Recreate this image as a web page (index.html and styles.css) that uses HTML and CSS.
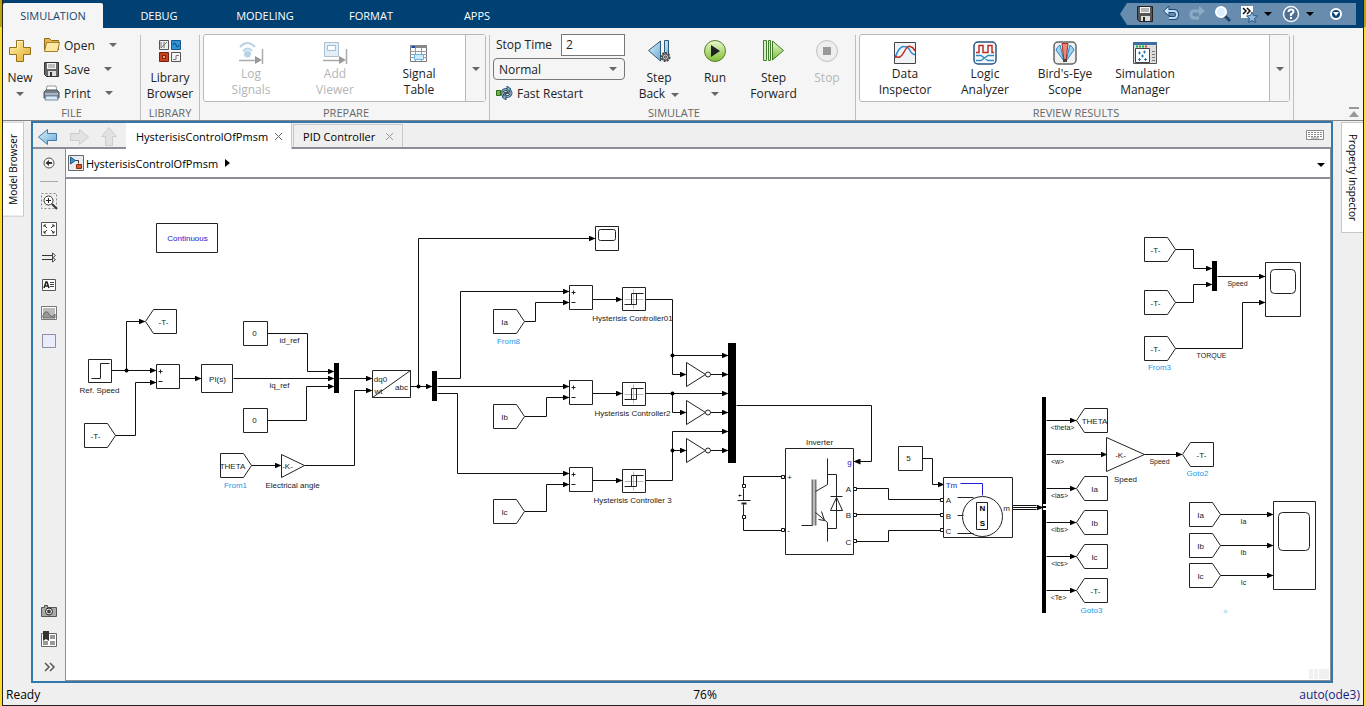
FILE: index.html
```
<!doctype html>
<html lang="en">
    <head>
        <meta charset="UTF-8" />
        <meta name="viewport" content="width=device-width, initial-scale=1.0" />
        <title>HysterisisControlOfPmsm - Simulink</title>
        <link rel="stylesheet" href="styles.css" />
    </head>
    <body>
        <div class="window">
            <header class="topbar">
                <nav class="ribbon-tabs">
                    <button class="ribbon-tab active">SIMULATION</button>
                    <button class="ribbon-tab">DEBUG</button>
                    <button class="ribbon-tab">MODELING</button>
                    <button class="ribbon-tab">FORMAT</button>
                    <button class="ribbon-tab">APPS</button>
                </nav>
                <div class="quick-access">
                    <button aria-label="Save">
                        <svg width="18" height="18" viewBox="0 0 18 18">
                            <path d="M1.500 1.500h15v15h-13l-2-2z" fill="#555" stroke="#222" />
                            <path d="M4 2h10v6H4z" fill="#f4f4f4" />
                            <path d="M5 4h8M5 6h8" stroke="#777" />
                            <path d="M5 11h9v5H5z" fill="#ddd" />
                            <path d="M7 12h2v4H7z" fill="#222" />
                        </svg>
                    </button>
                    <button aria-label="Undo">
                        <svg width="18" height="18" viewBox="0 0 18 18">
                            <path d="M6 6h6q3 0 3 3.500T12 13H7" fill="none" stroke="#1c4a78" stroke-width="4" />
                            <path d="M7 1v10L1.500 6z" fill="#cfe4f7" stroke="#1c4a78" />
                            <path d="M6 6h6q3 0 3 3.500T12 13H7" fill="none" stroke="#c3dcf3" stroke-width="2" />
                        </svg>
                    </button>
                    <button aria-label="Redo">
                        <svg width="18" height="18" viewBox="0 0 18 18">
                            <path d="M12 6H6q-3 0-3 3.500T6 13h5" fill="none" stroke="#8eabc5" stroke-width="3" />
                            <path d="M11 1v10l6-5z" fill="#8eabc5" />
                        </svg>
                    </button>
                    <button aria-label="Search">
                        <svg width="18" height="18" viewBox="0 0 18 18">
                            <path d="M10 10l6 6" stroke="#1b4770" stroke-width="3" />
                            <circle cx="7" cy="7" r="5" fill="#d9eefc" stroke="#fff" stroke-width="2" />
                        </svg>
                    </button>
                    <button class="with-caret" aria-label="Favorites">
                        <svg width="18" height="18" viewBox="0 0 18 18">
                            <path d="M1 1h12v12H1z" fill="#fff" />
                            <path d="M3 3l3 3-3 3M7 3l3 3-3 3" fill="none" stroke="#111" stroke-width="1.500" />
                            <path d="M12 7l1.500 3.500 4 .5-3 2.500 1 4-3.500-2-3.500 2 1-4-3-2.500 4-.5z" fill="#8fb9de" stroke="#2d5c8a" />
                        </svg>
                        <span class="caret dark"></span>
                    </button>
                    <button class="with-caret" aria-label="Help">
                        <svg width="18" height="18" viewBox="0 0 18 18">
                            <circle cx="9" cy="9" r="7.500" fill="#4d6f92" stroke="#f2f6fa" stroke-width="1.500" />
                            <path d="M6.500 7q0-2.500 2.500-2.500t2.500 2q0 1.500-1.500 2T9 11" fill="none" stroke="#fff" stroke-width="2" />
                            <path d="M8 12h2v2H8z" fill="#fff" />
                        </svg>
                        <span class="caret dark"></span>
                    </button>
                    <button aria-label="Minimize toolstrip">
                        <svg width="14" height="14" viewBox="0 0 14 14">
                            <circle cx="7" cy="7" r="5" fill="#0d4675" stroke="#fff" stroke-width="2" />
                            <path d="M4 5h6l-3 4z" fill="#fff" />
                        </svg>
                    </button>
                </div>
            </header>

            <section class="ribbon">
                <div class="group group-file">
                    <div class="group-body">
                        <button class="tool tool-new">
                            <svg width="24" height="24" viewBox="0 0 24 24">
                                <path d="M8.500 1.500h7v7h7v7h-7v7h-7v-7h-7v-7h7z" fill="url(#gold)" stroke="#94701b" />
                                <path d="M9.500 9.500v-7h5" fill="none" stroke="#fffbe0" />
                            </svg>
                            <span>New</span>
                            <span class="caret"></span>
                        </button>
                        <div class="file-list">
                            <button class="row-tool">
                                <svg width="17" height="16" viewBox="0 0 17 16">
                                    <path d="M1.500 13V1.500h5l2 2h7V13" fill="#e3b74d" stroke="#8b681c" />
                                    <path d="M1.500 14.500l2-9h13l-2 9z" fill="#fbe8a2" stroke="#a57d27" />
                                </svg>
                                <span>Open</span>
                                <span class="caret"></span>
                            </button>
                            <button class="row-tool">
                                <svg width="17" height="17" viewBox="0 0 17 17">
                                    <path d="M1.500 1.500h14v14h-12l-2-2z" fill="#666" stroke="#333" />
                                    <path d="M4 2h9v6H4z" fill="#f4f4f4" />
                                    <path d="M5 4h7M5 6h7" stroke="#888" />
                                    <path d="M5 10h8v5H5z" fill="#ddd" />
                                    <path d="M7 11h2v4H7z" fill="#333" />
                                </svg>
                                <span>Save</span>
                                <span class="caret"></span>
                            </button>
                            <button class="row-tool">
                                <svg width="17" height="16" viewBox="0 0 17 16">
                                    <path d="M4 1h9l1 6H3z" fill="#fff" stroke="#999" />
                                    <path d="M1 7l2-2h11l2 2v6H1z" fill="#76808c" stroke="#4b535c" />
                                    <path d="M2 8h13v2H2z" fill="#aab5c1" />
                                    <path d="M3 11h11l1 4H2z" fill="#dbe8f6" stroke="#7790a9" />
                                </svg>
                                <span>Print</span>
                                <span class="caret"></span>
                            </button>
                        </div>
                    </div>
                    <h2>FILE</h2>
                </div>

                <div class="group group-library">
                    <div class="group-body">
                        <button class="tool">
                            <svg width="24" height="24" viewBox="0 0 24 24">
                                <path d="M1.500 1.500h9v9h-9z" fill="#eee" stroke="#555" />
                                <path d="M3 9V3m3 6V3m3 0L3 9" fill="none" stroke="#777" />
                                <path d="M13.500 1.500h9v9h-9z" fill="#3193d6" stroke="#14578c" />
                                <path d="M15 6q1.500-4 3 0t3 0" fill="none" stroke="#0b3f70" />
                                <path d="M1.500 13.500h9v9h-9z" fill="#c9421f" stroke="#74200d" />
                                <path d="M4.500 16.500h3v3h-3z" fill="#f0a080" stroke="#74200d" />
                                <path d="M13.500 13.500h9v9h-9z" fill="#f4f4f4" stroke="#555" />
                                <path d="M15 20.500h3v-4h3" fill="none" stroke="#777" />
                            </svg>
                            <span>Library<br />Browser</span>
                        </button>
                    </div>
                    <h2>LIBRARY</h2>
                </div>

                <div class="group group-prepare">
                    <div class="group-body">
                        <div class="gallery">
                            <button class="tool" disabled>
                                <svg width="26" height="24" viewBox="0 0 26 24">
                                    <path d="M2 6q7-8 15 0M5 10q5-5 9 0" fill="none" stroke="#b9d3e6" stroke-width="2" />
                                    <circle cx="9.500" cy="13" r="3.500" fill="#b9d3e6" />
                                    <path d="M1 19.500h17M24.500 8v15" stroke="#aaa" stroke-width="1.500" />
                                    <path d="M17 15v8l7-4z" fill="#999" />
                                </svg>
                                <span>Log<br />Signals</span>
                            </button>
                            <button class="tool" disabled>
                                <svg width="26" height="24" viewBox="0 0 26 24">
                                    <path d="M2.500 1.500h14v14h-14z" fill="#e3eef6" stroke="#a9c1d3" />
                                    <path d="M5.500 4.500h8v5h-8z" fill="#fff" stroke="#9fbdd3" />
                                    <path d="M1 19.500h17M24.500 8v15" stroke="#aaa" stroke-width="1.500" />
                                    <path d="M17 15v8l7-4z" fill="#999" />
                                </svg>
                                <span>Add<br />Viewer</span>
                            </button>
                            <button class="tool">
                                <svg width="20" height="22" viewBox="0 0 20 22">
                                    <path d="M1.500 3.500h16v16h-16z" fill="#fff" stroke="#777" />
                                    <path d="M1 3h17v3H1z" fill="#888" />
                                    <path d="M3 4h3v2H3z" fill="#1747a5" />
                                    <path d="M1 9.500h17M1 12.500h17M1 15.500h17M6.500 6v13M12.500 6v13" stroke="#999" />
                                    <path d="M5.500 12.500h9v5h-9z" fill="#cbe9fd" stroke="#62b4ea" />
                                </svg>
                                <span>Signal<br />Table</span>
                            </button>
                            <button class="gallery-more" aria-label="More"><span class="caret"></span></button>
                        </div>
                    </div>
                    <h2>PREPARE</h2>
                </div>

                <div class="group group-simulate">
                    <div class="group-body">
                        <div class="sim-settings">
                            <div class="stop-time">
                                <label for="stopTime">Stop Time</label>
                                <input type="text" id="stopTime" value="2" />
                            </div>
                            <div class="mode">
                                <select aria-label="Simulation mode">
                                    <option>Normal</option>
                                </select>
                                <span class="caret"></span>
                            </div>
                            <button class="row-tool">
                                <svg width="17" height="14" viewBox="0 0 17 14">
                                    <path d="M.5 4.500h4v5h-4z" fill="#6cbb3c" stroke="#2f6b17" />
                                    <ellipse cx="10.500" cy="7" rx="4.500" ry="3.500" fill="#eef5fa" stroke="#2f5571" stroke-width="3" />
                                    <ellipse cx="10.500" cy="7" rx="4.500" ry="3.500" fill="none" stroke="#a5cbe4" />
                                    <path d="M11 0l4 3-4 3zM10 8l-4 3 4 3z" fill="#7fb0d0" stroke="#2f5571" />
                                    <path d="M8 7h5" stroke="#555" stroke-width="2" />
                                </svg>
                                <span>Fast Restart</span>
                            </button>
                        </div>
                        <div class="sim-buttons">
                            <button class="tool">
                                <svg width="24" height="24" viewBox="0 0 24 24">
                                    <path d="M13.500 2v20L1.500 11.500z" fill="url(#sky)" stroke="#2d5876" />
                                    <path d="M17.500 1.500h4v19h-4z" fill="url(#sky)" stroke="#2d5876" />
                                    <circle cx="18.500" cy="18" r="4" fill="#ddd" stroke="#444" stroke-width="2" stroke-dasharray="2 1" />
                                    <circle cx="18.500" cy="18" r="3" fill="#ccc" stroke="#444" />
                                    <circle cx="18.500" cy="18" r="1" fill="#fff" stroke="#333" />
                                </svg>
                                <span>Step<br />Back&nbsp; <span class="caret"></span></span>
                            </button>
                            <button class="tool">
                                <svg width="24" height="24" viewBox="0 0 24 24">
                                    <circle cx="12" cy="12" r="10.500" fill="url(#lime)" stroke="#5b7f2a" />
                                    <path d="M8 6v12l9-6z" fill="#222" />
                                </svg>
                                <span>Run</span>
                                <span class="caret"></span>
                            </button>
                            <button class="tool">
                                <svg width="24" height="24" viewBox="0 0 24 24">
                                    <path d="M1.500 1.500h3v20h-3zM6.500 1.500h2v20h-2z" fill="#d5efc4" stroke="#407d2c" />
                                    <path d="M10.500 2v19l11-9.500z" fill="url(#lime)" stroke="#407d2c" />
                                </svg>
                                <span>Step<br />Forward</span>
                            </button>
                            <button class="tool" disabled>
                                <svg width="24" height="24" viewBox="0 0 24 24">
                                    <circle cx="12" cy="12" r="10.500" fill="#eee" stroke="#c2c2c2" />
                                    <path d="M8 8h8v8H8z" fill="#999" />
                                </svg>
                                <span>Stop</span>
                            </button>
                        </div>
                    </div>
                    <h2>SIMULATE</h2>
                </div>

                <div class="group group-review">
                    <div class="group-body">
                        <div class="gallery">
                            <button class="tool">
                                <svg width="24" height="24" viewBox="0 0 24 24">
                                    <path d="M1.500 1.500h21v21h-21z" fill="#f0f2f4" stroke="#444" />
                                    <path d="M2 17Q6 5 11 5.500q4 0 6 4t5 4" fill="none" stroke="#2a8bd0" stroke-width="1.500" />
                                    <path d="M2 15q5 4 9-4t7-5q2 0 4 4" fill="none" stroke="#c4281c" stroke-width="1.500" />
                                </svg>
                                <span>Data<br />Inspector</span>
                            </button>
                            <button class="tool">
                                <svg width="24" height="24" viewBox="0 0 24 24">
                                    <rect x="1" y="1" width="22" height="22" rx="4" fill="#f8fafc" stroke="#2b5482" stroke-width="1.500" />
                                    <path d="M3 11.500h3v-7h4v7h5v-7h4v7h2" fill="none" stroke="#bd2f24" stroke-width="1.500" />
                                    <path d="M3 14.500h5l7 5h6M3 19.500h5l7-5h6" fill="none" stroke="#2f8bc6" stroke-width="1.500" />
                                </svg>
                                <span>Logic<br />Analyzer</span>
                            </button>
                            <button class="tool">
                                <svg width="24" height="24" viewBox="0 0 24 24">
                                    <rect x="1" y="1" width="22" height="22" rx="4" fill="#f1f1f1" stroke="#666" stroke-width="1.500" />
                                    <path d="M11 20L3 9q1-3 4-5zM13 20l8-11q-1-3-4-5z" fill="#9bd3f5" stroke="#2b83bd" />
                                    <path d="M9 2.500h6L13 20h-2z" fill="#e8897e" stroke="#a52d22" />
                                    <path d="M10 18h4v3h-4z" fill="#444" />
                                </svg>
                                <span>Bird's-Eye<br />Scope</span>
                            </button>
                            <button class="tool">
                                <svg width="24" height="24" viewBox="0 0 24 24">
                                    <path d="M.5 1.500h23v21H.5z" fill="#ddd" stroke="#555" />
                                    <path d="M0 1h24v3H0z" fill="#3b6f9e" />
                                    <path d="M3 5.500h8" stroke="#1fae42" stroke-width="2" stroke-dasharray="2 1" />
                                    <path d="M12 5.500h2" stroke="#d42" stroke-width="2" />
                                    <path d="M2.500 7.500h14v14h-14z" fill="#fff" stroke="#444" />
                                    <path d="M5 12h3M6.500 10.500v3M10 11h3M11.500 9.500v3M8 15h3M9.500 13.500v3M5 18.500h3M6.500 17v3M11 18.500h3M12.500 17v3" stroke="#2a7ab5" />
                                    <path d="M19 10.500h3M19 13.500h3M19 16.500h3M19 19.500h3" stroke="#777" />
                                </svg>
                                <span>Simulation<br />Manager</span>
                            </button>
                            <button class="gallery-more" aria-label="More"><span class="caret"></span></button>
                        </div>
                    </div>
                    <h2>REVIEW RESULTS</h2>
                </div>

                <button class="collapse" aria-label="Collapse toolstrip">
                    <svg width="10" height="10" viewBox="0 0 10 10">
                        <path d="M0 0h10v2H0zM5 4l5 6H0z" fill="#999" />
                    </svg>
                </button>
            </section>

            <main class="workspace">
                <aside class="rail rail-left">
                    <button class="rail-tab">Model Browser</button>
                </aside>

                <section class="editor">
                    <div class="doc-bar">
                        <div class="doc-nav">
                            <button aria-label="Back">
                                <svg width="20" height="18" viewBox="0 0 20 18">
                                    <path d="M.5 9L9.500 1.500v4h9v7h-9v4z" fill="url(#sky)" stroke="#3f7dab" />
                                </svg>
                            </button>
                            <button aria-label="Forward">
                                <svg width="20" height="18" viewBox="0 0 20 18">
                                    <path d="M19.500 9l-9-7.500v4h-9v7h9v4z" fill="#e2e2e2" stroke="#ccc" />
                                </svg>
                            </button>
                            <button aria-label="Up to parent">
                                <svg width="18" height="20" viewBox="0 0 18 20">
                                    <path d="M9 .5L1.500 9.500h4v9h7v-9h4z" fill="#e2e2e2" stroke="#ccc" />
                                </svg>
                            </button>
                        </div>
                        <div class="doc-tab active">
                            <a href="#">HysterisisControlOfPmsm</a>
                            <button aria-label="Close tab">
                                <svg width="9" height="9" viewBox="0 0 9 9"><path d="M1 1l7 7M8 1L1 8" stroke="#666" /></svg>
                            </button>
                        </div>
                        <div class="doc-tab">
                            <a href="#">PID Controller</a>
                            <button aria-label="Close tab">
                                <svg width="9" height="9" viewBox="0 0 9 9"><path d="M1 1l7 7M8 1L1 8" stroke="#999" /></svg>
                            </button>
                        </div>
                        <button class="keyboard" aria-label="Shortcuts">
                            <svg width="18" height="10" viewBox="0 0 18 10">
                                <path d="M.5.5h17v9H.5z" fill="#fff" stroke="#888" />
                                <path d="M2 2.500h14M2 4.500h14M2 6.500h14" stroke="#888" stroke-dasharray="2 1" />
                                <path d="M5 8h8" stroke="#888" />
                            </svg>
                        </button>
                    </div>

                    <div class="editor-main">
                        <div class="palette">
                            <button aria-label="Hide browser">
                                <svg width="12" height="12" viewBox="0 0 12 12">
                                    <circle cx="6" cy="6" r="5" fill="#f7f7f7" stroke="#555" />
                                    <path d="M6 3L2.500 6 6 9V7h3V5H6z" fill="#333" />
                                </svg>
                            </button>
                            <hr />
                            <button aria-label="Zoom">
                                <svg width="17" height="17" viewBox="0 0 17 17">
                                    <path d="M.5.5h15v15H.5z" fill="none" stroke="#888" stroke-dasharray="2 2" />
                                    <circle cx="7.500" cy="7.500" r="4.500" fill="#fff" stroke="#333" />
                                    <path d="M5 7.500h5M7.500 5v5" stroke="#222" />
                                    <path d="M11 11l5 5" stroke="#333" stroke-width="2" />
                                </svg>
                            </button>
                            <button aria-label="Fit to view">
                                <svg width="16" height="14" viewBox="0 0 16 14">
                                    <path d="M.5.5h15v13H.5z" fill="#fff" stroke="#555" />
                                    <path d="M3 5V3h2M11 3h2v2M13 9v2h-2M5 11H3V9M3 3l3 3M13 3l-3 3M13 11l-3-3M3 11l3-3" fill="none" stroke="#333" />
                                </svg>
                            </button>
                            <button aria-label="Sample times">
                                <svg width="15" height="11" viewBox="0 0 15 11">
                                    <path d="M0 3.500h11M0 7.500h11" stroke="#333" />
                                    <path d="M10.500 1l3 2.500-3 2.500zM10.500 5.500l3 2-3 2.500z" fill="#fff" stroke="#444" />
                                </svg>
                            </button>
                            <button aria-label="Annotation">
                                <svg width="14" height="12" viewBox="0 0 14 12">
                                    <path d="M.5.5h13v11H.5z" fill="#fff" stroke="#555" />
                                    <path d="M2 9l2-6h1l2 6M3 7h3" fill="none" stroke="#222" stroke-width="1.500" />
                                    <path d="M8 3.500h4M8 5.500h4M8 7.500h4" stroke="#444" />
                                </svg>
                            </button>
                            <button aria-label="Image">
                                <svg width="16" height="14" viewBox="0 0 16 14">
                                    <path d="M.5.5h15v13H.5z" fill="#fff" stroke="#777" />
                                    <path d="M2 2h12v10H2z" fill="#bbb" />
                                    <path d="M2 9q3-6 6-1t6 0v4H2z" fill="#999" stroke="#666" />
                                </svg>
                            </button>
                            <button aria-label="Area">
                                <svg width="14" height="14" viewBox="0 0 14 14">
                                    <path d="M.5.5h13v13H.5z" fill="#e8ecfb" stroke="#8b8fa0" />
                                </svg>
                            </button>
                            <span class="spacer"></span>
                            <button aria-label="Screenshot">
                                <svg width="16" height="12" viewBox="0 0 16 12">
                                    <path d="M.5 2.500h3v-2h3v2h9v9H.5z" fill="#aaa" stroke="#555" />
                                    <circle cx="8" cy="6.500" r="3.500" fill="#eee" stroke="#222" />
                                    <circle cx="8" cy="6.500" r="2" fill="#444" />
                                </svg>
                            </button>
                            <button aria-label="Viewmarks">
                                <svg width="16" height="16" viewBox="0 0 16 16">
                                    <path d="M.5 2.500h15v13H.5z" fill="#fff" stroke="#666" />
                                    <path d="M9 4h5v4H9zM9 10h5v4H9zM2 10h5v4H2z" fill="#999" />
                                    <path d="M2 0h6v10L5 8l-3 2z" fill="#333" />
                                </svg>
                            </button>
                            <button aria-label="More">
                                <svg width="11" height="10" viewBox="0 0 11 10">
                                    <path d="M1 1l4 4-4 4M6 1l4 4-4 4" fill="none" stroke="#555" stroke-width="1.500" />
                                </svg>
                            </button>
                        </div>

                        <div class="sheet">
                            <div class="crumbs">
                                <svg width="16" height="16" viewBox="0 0 16 16">
                                    <path d="M.5.5h15v15H.5z" fill="#e9edf2" stroke="#666" />
                                    <path d="M2.500 2v7l5-3.500z" fill="#3b96d2" stroke="#1c5c8d" />
                                    <path d="M7.500 5.500h3v3" fill="none" stroke="#333" />
                                    <path d="M8.500 9.500h5v4h-5z" fill="#dd5a2a" stroke="#8a2c0c" />
                                </svg>
                                <a href="#">HysterisisControlOfPmsm</a>
                                <span class="crumb-arrow"></span>
                                <button aria-label="History"><span class="caret dark"></span></button>
                            </div>

                            <div class="canvas">
                                <svg class="diagram" role="img" aria-label="PMSM hysteresis control model">
                                    <defs>
                                        <linearGradient id="gold" x2="1" y2="1">
                                            <stop offset="0" stop-color="#fff6b8" />
                                            <stop offset="1" stop-color="#e3a823" />
                                        </linearGradient>
                                        <linearGradient id="sky" x2="1" y2="1">
                                            <stop offset="0" stop-color="#d9effc" />
                                            <stop offset="1" stop-color="#6eacd4" />
                                        </linearGradient>
                                        <linearGradient id="lime" x2="0" y2="1">
                                            <stop offset="0" stop-color="#eaf8cf" />
                                            <stop offset="1" stop-color="#7fbf35" />
                                        </linearGradient>
                                        <marker id="arrow" markerUnits="userSpaceOnUse" markerWidth="7" markerHeight="6" refX="6" refY="3" orient="auto">
                                            <path d="M0 0l7 3-7 3z" fill="#000" />
                                        </marker>
                                        <path id="from" d="M0-12h23l8 12-8 12H0z" />
                                        <path id="goto" d="M0 0l8-12h23v24H8z" />
                                        <path id="not" d="M0-12l19 12L0 12zM19 0a2 2 0 1 0 5 0a2 2 0 1 0-5 0z" />
                                        <path id="const" d="M0 0h24v24H0z" />
                                        <g id="sum">
                                            <path d="M0 0h23v24H0z" />
                                            <path d="M2 7h4M4 5v4M2 17h4" />
                                        </g>
                                        <g id="relay">
                                            <path d="M0 0h23v23H0z" />
                                            <path class="axis" d="M11 2v19M2 12h19" />
                                            <path d="M2 17h12V6M9 17V6h12" />
                                        </g>
                                        <path id="port" d="M-1-1h3v3h-3z" />
                                    </defs>

                                    <!-- mux and bus bars -->
                                    <g class="bars" transform="translate(-66 -179)">
                                        <rect x="334" y="363" width="5" height="30" />
                                        <rect x="432" y="371" width="5" height="30" />
                                        <rect x="728" y="343" width="8" height="120" />
                                        <rect x="1212" y="261" width="5" height="30" />
                                        <rect x="1042" y="397" width="4" height="216" />
                                        <rect class="notch" x="1043" y="504" width="3" height="2" />
                                        <rect class="notch" x="1043" y="508" width="3" height="2" />
                                    </g>

                                    <g transform="translate(-65.500 -178.500)">
                                        <!-- signal lines -->
                                        <g class="wires">
                                            <path d="M111 370H155" />
                                            <path d="M126 370V321H144" />
                                            <path d="M115 435H135V382H155" />
                                            <path d="M179 378H200" />
                                            <path d="M267 333H307V371H333" />
                                            <path d="M233 378H333" />
                                            <path d="M267 420H306V386H333" />
                                            <path d="M251 465H280" />
                                            <path d="M304 465H354V390H371" />
                                            <path d="M339 378H371" />
                                            <path d="M410 386H431" />
                                            <path d="M418 386V238H594" />
                                            <path d="M437 378H460V291H568" />
                                            <path d="M437 386H568" />
                                            <path d="M437 393H457V473H568" />
                                            <path d="M524 321H535V302H568" />
                                            <path d="M524 416H546V397H568" />
                                            <path d="M524 511H546V484H568" />
                                            <path d="M592 299H621" />
                                            <path d="M592 393H621" />
                                            <path d="M592 480H621" />
                                            <path d="M645 299H672V374H685" />
                                            <path d="M672 355H727" />
                                            <path d="M645 393H727" />
                                            <path d="M672 393V412H685" />
                                            <path d="M645 480H672V431H727" />
                                            <path d="M672 450H685" />
                                            <path d="M710 374H727" />
                                            <path d="M710 412H727" />
                                            <path d="M710 450H727" />
                                            <path d="M736 405H871V461H854" />
                                            <path d="M922 458H932V484H943" />
                                            <path d="M1012 507H1042" />
                                            <path d="M1046 420H1075" />
                                            <path d="M1046 454H1106" />
                                            <path d="M1046 488H1075" />
                                            <path d="M1046 522H1075" />
                                            <path d="M1046 556H1075" />
                                            <path d="M1046 590H1075" />
                                            <path d="M1144 454H1181" />
                                            <path d="M1220 514H1272" />
                                            <path d="M1220 545H1272" />
                                            <path d="M1220 575H1272" />
                                            <path d="M1175 249H1193V268H1211" />
                                            <path d="M1175 302H1193V284H1211" />
                                            <path d="M1217 276H1264" />
                                            <path d="M1175 348H1242V302H1264" />
                                        </g>
                                        <g class="junctions">
                                            <circle cx="126" cy="370" r="2" />
                                            <circle cx="418" cy="386" r="2" />
                                            <circle cx="672" cy="355" r="2" />
                                            <circle cx="672" cy="393" r="2" />
                                            <circle cx="672" cy="450" r="2" />
                                        </g>

                                        <!-- power lines -->
                                        <g class="power">
                                            <path d="M783 476H743V485M743 517V530H783" />
                                            <path d="M855 488H888V499H942M855 514H942M855 541H888V530H942" />
                                            <path class="bus-line" d="M1012 505H1036M1012 509H1036" />
                                            <use href="#port" x="743" y="485" />
                                            <use href="#port" x="743" y="516" />
                                            <use href="#port" x="782" y="476" />
                                            <use href="#port" x="782" y="529" />
                                            <use href="#port" x="854" y="488" />
                                            <use href="#port" x="854" y="514" />
                                            <use href="#port" x="854" y="540" />
                                            <use href="#port" x="941" y="499" />
                                            <use href="#port" x="941" y="514" />
                                            <use href="#port" x="941" y="529" />
                                        </g>

                                        <!-- blocks -->
                                        <g class="blocks">
                                            <path d="M156 223h61v29h-61z" />
                                            <path d="M88 359h23v23H88zM91 378h9v-15h9" />
                                            <use href="#goto" x="145" y="321" />
                                            <use href="#from" x="84" y="435" />
                                            <use href="#sum" x="156" y="364" />
                                            <path d="M201 364h31v28h-31z" />
                                            <use href="#const" x="243" y="321" />
                                            <use href="#const" x="243" y="408" />
                                            <use href="#from" x="220" y="465" />
                                            <path d="M281 454l23 11-23 12z" />
                                            <path d="M372 370h38v27h-38zM372 397l38-27" />
                                            <path d="M595 226h23v24h-23z" />
                                            <rect x="598" y="229" width="17" height="11" rx="2" />
                                            <use href="#sum" x="569" y="285" />
                                            <use href="#sum" x="569" y="380" />
                                            <use href="#sum" x="569" y="467" />
                                            <use href="#from" x="493" y="321" />
                                            <use href="#from" x="493" y="416" />
                                            <use href="#from" x="493" y="511" />
                                            <use href="#relay" x="622" y="287" />
                                            <use href="#relay" x="622" y="382" />
                                            <use href="#relay" x="622" y="469" />
                                            <use href="#not" x="686" y="374" />
                                            <use href="#not" x="686" y="412" />
                                            <use href="#not" x="686" y="450" />
                                            <use href="#const" x="898" y="446" />
                                            <use href="#goto" x="1076" y="420" />
                                            <path d="M1106 437l38 17-38 17z" />
                                            <use href="#goto" x="1182" y="454" />
                                            <use href="#goto" x="1076" y="488" />
                                            <use href="#goto" x="1076" y="522" />
                                            <use href="#goto" x="1076" y="556" />
                                            <use href="#goto" x="1076" y="590" />
                                            <use href="#from" x="1189" y="514" />
                                            <use href="#from" x="1189" y="545" />
                                            <use href="#from" x="1189" y="575" />
                                            <path d="M1273 501h42v88h-42z" />
                                            <rect x="1278" y="512" width="31" height="38" rx="4" />
                                            <use href="#from" x="1144" y="249" />
                                            <use href="#from" x="1144" y="302" />
                                            <use href="#from" x="1144" y="348" />
                                            <path d="M1265 262h35v54h-35z" />
                                            <rect x="1270" y="269" width="25" height="24" rx="4" />
                                        </g>

                                        <!-- dc source -->
                                        <g class="blocks">
                                            <path d="M743 488V500M737 500h13M743 504V515" />
                                            <path d="M741 503h5" stroke-width="2" />
                                            <path d="M738 495h3M739 494v2" />
                                        </g>

                                        <!-- inverter -->
                                        <g class="blocks">
                                            <path d="M785 448h68v106h-68z" />
                                            <path class="gate" d="M812 525V479M815 479V525" />
                                            <path d="M801 525h11" />
                                            <path d="M815 491l12-7V458M815 512l12 10V541" />
                                            <path d="M827 474h9V528h-9" />
                                            <path d="M836 497l-6 13h12zM830 496h12" />
                                            <path d="M818 519l6 1-3-9" />
                                        </g>

                                        <!-- machine -->
                                        <g class="blocks">
                                            <path d="M943 477h69v60h-69z" />
                                            <path d="M957 497h16M957 515h6M957 533h16" />
                                            <path class="torque" d="M960 483h22v12" />
                                            <circle cx="982" cy="516" r="20" />
                                            <path d="M976 502h11v27h-11z" />
                                        </g>

                                        <g class="names">
                                            <text x="187" y="240" class="blue">Continuous</text>
                                            <text x="163" y="324">-T-</text>
                                            <text x="99" y="392">Ref. Speed</text>
                                            <text x="95" y="438">-T-</text>
                                            <text x="217" y="381">PI(s)</text>
                                            <text x="254" y="335">0</text>
                                            <text x="254" y="422">0</text>
                                            <text x="289" y="342">id_ref</text>
                                            <text x="279" y="387">iq_ref</text>
                                            <text x="232" y="468">THETA</text>
                                            <text x="235" y="487" class="tag">From1</text>
                                            <text x="287" y="468">-K-</text>
                                            <text x="292" y="487">Electrical angle</text>
                                            <text x="380" y="381">dq0</text>
                                            <text x="378" y="393">wt</text>
                                            <text x="401" y="389">abc</text>
                                            <text x="504" y="324">Ia</text>
                                            <text x="508" y="343" class="tag">From8</text>
                                            <text x="504" y="419">Ib</text>
                                            <text x="504" y="514">Ic</text>
                                            <text x="632" y="320">Hysterisis Controller01</text>
                                            <text x="632" y="415">Hysterisis Controller2</text>
                                            <text x="632" y="502">Hysterisis Controller 3</text>
                                            <text x="819" y="444">Inverter</text>
                                            <text x="789" y="479">+</text>
                                            <text x="788" y="532">-</text>
                                            <text x="849" y="464" class="blue">g</text>
                                            <text x="848" y="491">A</text>
                                            <text x="848" y="517">B</text>
                                            <text x="848" y="544">C</text>
                                            <text x="908" y="460">5</text>
                                            <text x="951" y="487" class="blue">Tm</text>
                                            <text x="948" y="502">A</text>
                                            <text x="948" y="518">B</text>
                                            <text x="948" y="533">C</text>
                                            <text x="982" y="510" class="pole">N</text>
                                            <text x="982" y="525" class="pole">S</text>
                                            <text x="1006" y="510">m</text>
                                            <text x="1094" y="423">THETA</text>
                                            <text x="1120" y="457">-K-</text>
                                            <text x="1125" y="481">Speed</text>
                                            <text x="1094" y="491">Ia</text>
                                            <text x="1094" y="525">Ib</text>
                                            <text x="1094" y="559">Ic</text>
                                            <text x="1095" y="593">-T-</text>
                                            <text x="1091" y="612" class="tag">Goto3</text>
                                            <text x="1201" y="457">-T-</text>
                                            <text x="1197" y="475" class="tag">Goto2</text>
                                            <text x="1200" y="517">Ia</text>
                                            <text x="1200" y="548">Ib</text>
                                            <text x="1200" y="578">Ic</text>
                                            <text x="1155" y="252">-T-</text>
                                            <text x="1155" y="305">-T-</text>
                                            <text x="1155" y="351">-T-</text>
                                            <text x="1159" y="369" class="tag">From3</text>
                                        </g>
                                        <g class="names signal">
                                            <text x="1062" y="429">&lt;theta&gt;</text>
                                            <text x="1057" y="463">&lt;w&gt;</text>
                                            <text x="1059" y="497">&lt;ias&gt;</text>
                                            <text x="1059" y="531">&lt;ibs&gt;</text>
                                            <text x="1059" y="565">&lt;ics&gt;</text>
                                            <text x="1058" y="599">&lt;Te&gt;</text>
                                            <text x="1159" y="463">Speed</text>
                                            <text x="1243" y="523">Ia</text>
                                            <text x="1243" y="554">Ib</text>
                                            <text x="1243" y="584">Ic</text>
                                            <text x="1237" y="285">Speed</text>
                                            <text x="1211" y="357">TORQUE</text>
                                        </g>
                                        <circle cx="1225" cy="611" r="2" fill="#c5e8f5" />
                                    </g>
                                </svg>
                                <div class="corner"><i></i><i></i><i class="wide"></i></div>
                            </div>
                        </div>
                    </div>
                </section>

                <aside class="rail rail-right">
                    <button class="rail-tab">Property Inspector</button>
                </aside>
            </main>

            <footer class="status">
                <span>Ready</span>
                <span class="zoom">76%</span>
                <a href="#">auto(ode3)</a>
            </footer>
        </div>
    </body>
</html>
```

FILE: styles.css
```
* {
    box-sizing: border-box;
}
body {
    margin: 0;
    height: 100vh;
    border: 0 solid;
    border-width: 0 2px;
    border-image: linear-gradient(#b9a512 28px, #fddc2e 28px) 1;
    font-family: "Open Sans", "Noto Sans", sans-serif;
    font-size: 12px;
    color: #222;
    overflow: hidden;
}
button {
    font: inherit;
    color: inherit;
    background: none;
    border: 0;
    padding: 0;
    cursor: pointer;
}
button:disabled {
    color: #b5b5b5;
    cursor: default;
}
a {
    color: inherit;
    text-decoration: none;
}
svg {
    display: block;
    flex: none;
}
.window {
    height: 100%;
    display: flex;
    flex-direction: column;
    background: #efefef;
    border: 1px solid #222;
    border-top: 0;
}
.caret {
    display: inline-block;
    border: 4px solid transparent;
    border-top: 4px solid #666;
    border-bottom: 0;
    vertical-align: middle;
}
.caret.dark {
    border-top-color: #000;
}

/* title row */
.topbar {
    height: 28px;
    flex: none;
    display: flex;
    justify-content: space-between;
    background: #004072;
}
.ribbon-tabs {
    display: flex;
    padding-top: 3px;
}
.ribbon-tab {
    width: 106px;
    font-size: 11px;
    line-height: 24px;
    color: #fff;
}
.ribbon-tab.active {
    width: 100px;
    margin-right: 3px;
    background: #f5f5f5;
    color: #16436d;
    border-radius: 2px 2px 0 0;
}
.quick-access {
    display: flex;
    align-items: center;
    gap: 8px;
    height: 22px;
    margin: 3px 7px 0 0;
    padding: 0 13px 0 16px;
    background: #678cae;
    clip-path: polygon(0 50%, 7px 0, 100% 0, 100% 100%, 7px 100%);
}
.with-caret {
    display: flex;
    align-items: center;
    gap: 6px;
    margin-right: 2px;
}
.quick-access button:last-child {
    margin-left: 5px;
}

/* toolstrip */
.ribbon {
    height: 93px;
    flex: none;
    display: flex;
    background: #f5f5f5;
    border-bottom: 1px solid #858585;
}
.group {
    display: flex;
    flex-direction: column;
    padding-top: 6px;
    border-right: 1px solid #c0c0c0;
    border-image: linear-gradient(transparent 8px, #c0c0c0 8px) 1;
}
.group-body {
    flex: 1;
    min-height: 0;
    display: flex;
}
.group h2 {
    margin: 0;
    font-size: 11px;
    font-weight: normal;
    line-height: 14px;
    text-align: center;
    color: #666;
}
.group-file {
    width: 138px;
}
.group-library {
    width: 59px;
}
.group-prepare {
    width: 290px;
    padding-left: 3px;
}
.group-simulate {
    width: 366px;
    padding-left: 3px;
}
.group-review {
    width: 438px;
    padding-left: 3px;
}
.tool {
    display: flex;
    flex-direction: column;
    align-items: center;
    justify-content: flex-start;
    line-height: 16px;
    padding-top: 5px;
}
.tool svg {
    height: 24px;
    margin-bottom: 7px;
}
.tool > .caret {
    margin-top: 6px;
}
.tool-new {
    width: 34px;
}
.group-library .tool {
    width: 58px;
}
.file-list {
    margin-top: -1px;
    padding-left: 6px;
}
.row-tool {
    display: flex;
    align-items: center;
    gap: 4px;
    height: 24px;
}
.row-tool .caret {
    margin-left: 10px;
}
.gallery {
    display: flex;
    height: 68px;
    padding-left: 5px;
    background: #fff;
    border: 1px solid #b8b8b8;
    border-radius: 3px;
}
.gallery .tool {
    width: 84px;
    padding-top: 6px;
}
.gallery .tool svg {
    margin-bottom: 1px;
}
.group-prepare .gallery {
    width: 283px;
}
.group-review .gallery {
    width: 431px;
}
.group-review .gallery .tool {
    width: 80px;
}
.gallery-more {
    width: 20px;
    margin-left: auto;
    background: #f5f5f5;
    border-left: 1px solid #b8b8b8;
}
.sim-settings {
    width: 132px;
}
.stop-time {
    display: flex;
    justify-content: space-between;
    align-items: center;
    padding-left: 3px;
    height: 21px;
}
.stop-time input {
    width: 64px;
    height: 22px;
    padding: 0 4px;
    border: 1px solid #777;
    background: #fff;
    font: inherit;
    color: inherit;
}
.mode {
    position: relative;
    margin: 3px 0 1px;
}
.mode select {
    display: block;
    width: 100%;
    height: 22px;
    padding: 0 5px;
    appearance: none;
    background: #f5f5f5;
    border: 1px solid #777;
    border-radius: 4px;
    font: inherit;
    color: inherit;
}
.mode .caret {
    position: absolute;
    right: 8px;
    top: 9px;
    pointer-events: none;
}
.sim-settings .row-tool {
    padding-left: 3px;
}
.sim-buttons {
    display: flex;
    padding-left: 6px;
}
.sim-buttons .tool {
    width: 56px;
}
.sim-buttons .tool:nth-child(3) {
    width: 61px;
}
.sim-buttons .tool:nth-child(4) {
    width: 46px;
}
.collapse {
    align-self: flex-end;
    margin: 0 4px 3px auto;
}

/* workspace */
.workspace {
    flex: 1;
    min-height: 0;
    display: flex;
}
.rail {
    flex: none;
    padding-top: 1px;
    font-size: 10px;
    color: #000;
}
.rail-left {
    width: 28px;
}
.rail-right {
    width: 30px;
    padding-left: 8px;
}
.rail-tab {
    writing-mode: vertical-rl;
    width: 21px;
    padding: 11px 0;
    background: #fff;
    border: 1px solid #c8c8c8;
    border-right: 0;
}
.rail-left .rail-tab {
    transform: rotate(180deg);
}
.rail-right .rail-tab {
    width: 22px;
}
.editor {
    flex: 1;
    min-width: 0;
    display: flex;
    flex-direction: column;
    border: 2px solid #3378ad;
}
.doc-bar {
    display: flex;
    align-items: flex-end;
    flex: none;
    height: 26px;
    border-bottom: 2px solid #8b8e96;
    font-size: 11px;
    color: #000;
}
.doc-nav {
    display: flex;
    align-items: center;
    gap: 11px;
    width: 93px;
    height: 24px;
    padding: 3px 0 0 5px;
}
.doc-tab {
    display: flex;
    align-items: center;
    justify-content: space-between;
    gap: 6px;
    min-width: 110px;
    height: 23px;
    margin-left: 1px;
    padding: 0 8px 0 9px;
    border: 1px solid #c8c8c8;
    border-bottom: 0;
}
.doc-tab.active {
    height: 26px;
    margin: 0 0 -2px;
    padding-left: 10px;
    background: #fff;
    border: 0;
    border-right: 1px solid #c8c8c8;
}
.keyboard {
    align-self: center;
    margin: 0 7px 0 auto;
}
.editor-main {
    flex: 1;
    min-height: 0;
    display: flex;
}
.palette {
    width: 32px;
    flex: none;
    display: flex;
    flex-direction: column;
}
.palette button {
    display: flex;
    align-items: center;
    justify-content: center;
    height: 28px;
}
.palette hr {
    width: 18px;
    height: 1px;
    margin: 4px auto 5px;
    border: 0;
    background: #a8a8a8;
}
.spacer {
    flex: 1;
}
.sheet {
    flex: 1;
    min-width: 0;
    display: flex;
    flex-direction: column;
    border-left: 1px solid #8b8e96;
    border-right: 1px solid #8b8e96;
}
.crumbs {
    display: flex;
    align-items: center;
    height: 30px;
    flex: none;
    padding: 0 5px 0 2px;
    gap: 2px;
    background: #fff;
    border-bottom: 2px solid #8b8e96;
    font-size: 11px;
    color: #000;
}
.crumb-arrow {
    margin-left: 5px;
    border: 4px solid transparent;
    border-left: 5px solid #000;
    border-right: 0;
}
.crumbs button {
    margin-left: auto;
}
.canvas {
    flex: 1;
    min-height: 0;
    position: relative;
    background: #fff;
    border-bottom: 1px solid #8b8e96;
}
.corner {
    position: absolute;
    right: 1px;
    bottom: 1px;
    display: flex;
    gap: 1px;
}
.corner i {
    width: 4px;
    height: 10px;
    background: #f0f0f0;
}
.corner .wide {
    width: 10px;
}

/* block diagram */
.diagram {
    width: 100%;
    height: 100%;
    font-family: "Liberation Sans", Arial, sans-serif;
    font-size: 8px;
}
.wires path {
    fill: none;
    stroke: #111;
    marker-end: url(#arrow);
}
.power {
    fill: #fff;
    stroke: #111;
}
.power > path {
    fill: none;
}
.blocks {
    fill: none;
    stroke: #222;
}
.axis {
    stroke: #bbb;
}
.gate {
    stroke: #777;
    stroke-width: 2px;
}
.bars {
    fill: #000;
    shape-rendering: crispEdges;
}
.notch {
    fill: #fff;
}
.torque {
    stroke: #2020d0;
}
.names {
    fill: #222;
    text-anchor: middle;
}
.names.signal {
    font-size: 7px;
}
.names .blue {
    fill: #2020c8;
}
.names .tag {
    fill: #1e98e8;
}
.names .pole {
    font-weight: bold;
    fill: #000;
}

/* status bar */
.status {
    flex: none;
    height: 22px;
    display: grid;
    grid-template-columns: 1fr auto 1fr;
    align-items: center;
    padding: 0 3px;
    color: #000;
}
.status .zoom {
    padding-left: 44px;
}
.status a {
    justify-self: end;
    color: #1a1a80;
}
```
